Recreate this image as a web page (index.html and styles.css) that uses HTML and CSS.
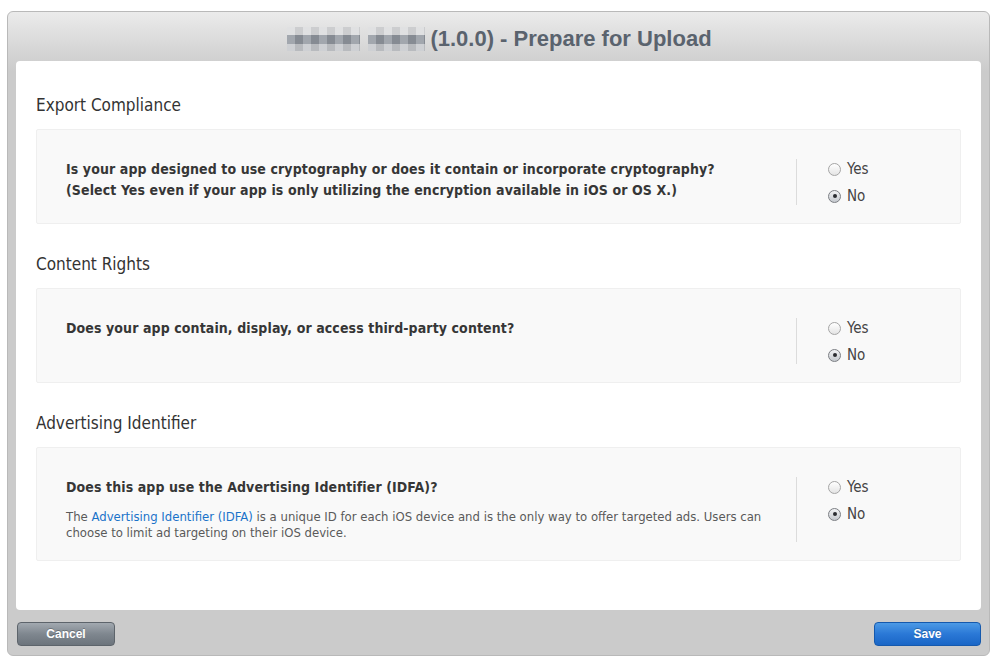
FILE: index.html
```html
<!DOCTYPE html>
<html>
<head>
<meta charset="utf-8">
<link rel="stylesheet" href="styles.css">
</head>
<body>
<div class="frame">
  <div class="header">
    <span class="blur"><span class="blur-a"></span><span class="blur-b"></span></span>
    <h1 class="title">(1.0.0) - Prepare for Upload</h1>
  </div>
  <div class="panel">
    <h2 class="section-title">Export Compliance</h2>
    <div class="box">
      <div class="question">
        <p class="q-text">Is your app designed to use cryptography or does it contain or incorporate cryptography?<br>(Select Yes even if your app is only utilizing the encryption available in iOS or OS X.)</p>
      </div>
      <div class="choices">
        <label class="choice"><span class="radio"></span>Yes</label>
        <label class="choice"><span class="radio checked"></span>No</label>
      </div>
    </div>

    <h2 class="section-title">Content Rights</h2>
    <div class="box">
      <div class="question">
        <p class="q-text">Does your app contain, display, or access third-party content?</p>
      </div>
      <div class="choices">
        <label class="choice"><span class="radio"></span>Yes</label>
        <label class="choice"><span class="radio checked"></span>No</label>
      </div>
    </div>

    <h2 class="section-title">Advertising Identifier</h2>
    <div class="box box-last">
      <div class="question">
        <p class="q-text">Does this app use the Advertising Identifier (IDFA)?</p>
        <p class="q-desc">The <a class="link" href="#">Advertising Identifier (IDFA)</a> is a unique ID for each iOS device and is the only way to offer targeted ads. Users can choose to limit ad targeting on their iOS device.</p>
      </div>
      <div class="choices">
        <label class="choice"><span class="radio"></span>Yes</label>
        <label class="choice"><span class="radio checked"></span>No</label>
      </div>
    </div>
  </div>
  <div class="footer">
    <button class="btn btn-cancel">Cancel</button>
    <button class="btn btn-save">Save</button>
  </div>
</div>
</body>
</html>
```

FILE: styles.css
```css
html, body {
  margin: 0;
  padding: 0;
  background: #ffffff;
}

body {
  font-family: "DejaVu Sans Condensed", "DejaVu Sans", sans-serif;
  font-stretch: condensed;
  width: 999px;
  height: 666px;
  overflow: hidden;
}

.frame {
  margin: 11px 0 0 7px;
  width: 981px;
  height: 643px;
  border: 1px solid #b9b9b9;
  border-radius: 6px;
  background: linear-gradient(to bottom, #ebebeb 0px, #d2d2d2 45px, #cbcbcb 60px, #cbcbcb 100%);
  display: flex;
  flex-direction: column;
}

.header {
  height: 49px;
  display: flex;
  align-items: center;
  justify-content: center;
  gap: 5px;
  padding-left: 2px;
  padding-top: 5px;
  box-sizing: border-box;
}

.blur {
  display: flex;
  gap: 8px;
  height: 24px;
}

.blur-a, .blur-b {
  display: block;
  height: 24px;
  background:
    repeating-linear-gradient(to right, rgba(255,255,255,0.18) 0 8px, rgba(0,0,0,0.06) 8px 16px),
    linear-gradient(to bottom, #d9dadc 0 8px, #8e949c 8px 17px, #c3c6ca 17px 24px);
}

.blur-a { width: 73px; }
.blur-b { width: 57px; }

.title {
  margin: 0;
  font-family: "Liberation Sans Narrow", "Liberation Sans", sans-serif;
  font-stretch: condensed;
  font-weight: bold;
  font-size: 22px;
  color: #5a636e;
}

.panel {
  margin: 0 8px;
  height: 549px;
  box-sizing: border-box;
  background: #ffffff;
  border-radius: 4px;
  padding: 34px 20px 0 20px;
}

.section-title {
  margin: 0 0 14px 0;
  font-size: 17px;
  line-height: 20px;
  font-weight: normal;
  color: #333333;
}

.box {
  display: flex;
  align-items: stretch;
  background: #f9f9f9;
  border: 1px solid #efefef;
  border-radius: 2px;
  padding: 29px 0 19px 29px;
  margin-bottom: 30px;
}

.box-last {
  margin-bottom: 0;
}

.question {
  flex: 1;
}

.q-text {
  margin: 0;
  font-size: 14px;
  line-height: 21px;
  font-weight: bold;
  letter-spacing: 0.1px;
  color: #363636;
}

.q-desc {
  margin: 11px 0 0 0;
  font-size: 13px;
  line-height: 16px;
  color: #5a5a5a;
}

.link {
  color: #1a73c9;
  text-decoration: none;
}

.choices {
  width: 164px;
  box-sizing: border-box;
  border-left: 1px solid #dcdcdc;
  padding-left: 31px;
  padding-top: 1px;
  margin-bottom: -1px;
  display: flex;
  flex-direction: column;
  gap: 9px;
}

.choice {
  display: flex;
  align-items: center;
  gap: 6px;
  height: 18px;
  font-size: 15px;
  color: #444444;
}

.radio {
  width: 11px;
  height: 11px;
  border: 1px solid #a5a5a5;
  border-radius: 50%;
  background: linear-gradient(to bottom, #ffffff, #e4e4e4);
  position: relative;
  flex: none;
}

.radio.checked {
  border-color: #7c7f84;
  background: linear-gradient(to bottom, #f2f3f5, #c5c9ce);
}

.radio.checked::after {
  content: "";
  position: absolute;
  left: 3.5px;
  top: 3.5px;
  width: 4px;
  height: 4px;
  border-radius: 50%;
  background: #2a2c30;
}

.footer {
  flex: 1;
  display: flex;
  justify-content: space-between;
  align-items: flex-start;
  padding: 12px 8px 0 9px;
}

.btn {
  height: 24px;
  border-radius: 4px;
  font-family: "Liberation Sans", Arial, sans-serif;
  font-weight: bold;
  font-size: 12px;
  color: #ffffff;
  padding: 0;
  text-shadow: 0 -1px 0 rgba(0,0,0,0.25);
}

.btn-cancel {
  width: 98px;
  border: 1px solid #5d646b;
  background: linear-gradient(to bottom, #a2a9b0 0%, #7f878f 50%, #6c747c 100%);
}

.btn-save {
  width: 107px;
  border: 1px solid #1559ad;
  background: linear-gradient(to bottom, #4c9ae6 0%, #2a78d6 50%, #1a66c6 100%);
}
```
